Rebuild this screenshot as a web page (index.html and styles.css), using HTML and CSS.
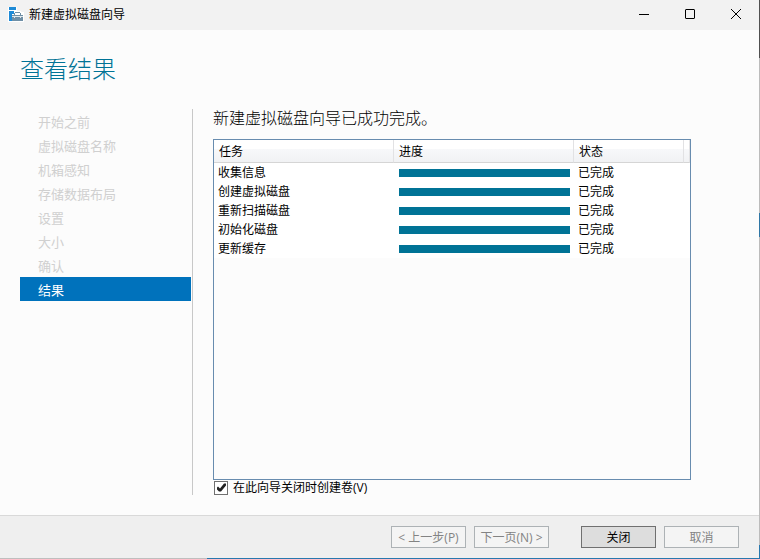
FILE: index.html
```html
<!DOCTYPE html>
<html lang="zh-CN">
<head>
<meta charset="utf-8">
<title>新建虚拟磁盘向导</title>
<link rel="stylesheet" href="styles.css">
</head>
<body>
<div class="window">
  <header class="titlebar">
    <svg class="app-icon" viewBox="0 0 16 16" shape-rendering="crispEdges" aria-hidden="true">
      <path fill="#fff" d="M0 0h9v4h4v1h3v10H0z"/>
      <path fill="#1e8ad6" d="M1 0h7v3H1zM1 4h5v3H4v7H1z"/>
      <path fill="#6f8fa6" d="M4 8h11v6H4zM6 6h1V5h5v1h1v2h-1V6H7v2H6z"/>
      <path fill="#dfe7ec" d="M4 9h11v1H4zM6 10h1v1H6zM12 10h1v1h-1z"/>
    </svg>
    <span class="window-title">新建虚拟磁盘向导</span>
    <div class="window-controls">
      <button type="button" aria-label="最小化"><svg viewBox="0 0 10 10"><path d="M0 5.500h10"/></svg></button>
      <button type="button" aria-label="最大化"><svg viewBox="0 0 10 10"><rect x=".5" y=".5" width="9" height="9" rx=".5"/></svg></button>
      <button type="button" aria-label="关闭窗口"><svg viewBox="0 0 10 10"><path d="M0 0l10 10M10 0L0 10"/></svg></button>
    </div>
  </header>
  <h1>查看结果</h1>
  <main class="content">
    <nav class="steps">
      <ol>
        <li>开始之前</li>
        <li>虚拟磁盘名称</li>
        <li>机箱感知</li>
        <li>存储数据布局</li>
        <li>设置</li>
        <li>大小</li>
        <li>确认</li>
        <li class="current" aria-current="step">结果</li>
      </ol>
    </nav>
    <section class="results">
      <h2>新建虚拟磁盘向导已成功完成。</h2>
      <div class="list">
        <table>
          <colgroup><col class="col-wide"><col class="col-wide"><col><col class="col-end"></colgroup>
          <thead><tr><th>任务</th><th>进度</th><th>状态</th><td></td></tr></thead>
          <tbody>
            <tr><td>收集信息</td><td><div class="bar"></div></td><td colspan="2">已完成</td></tr>
            <tr><td>创建虚拟磁盘</td><td><div class="bar"></div></td><td colspan="2">已完成</td></tr>
            <tr><td>重新扫描磁盘</td><td><div class="bar"></div></td><td colspan="2">已完成</td></tr>
            <tr><td>初始化磁盘</td><td><div class="bar"></div></td><td colspan="2">已完成</td></tr>
            <tr><td>更新缓存</td><td><div class="bar"></div></td><td colspan="2">已完成</td></tr>
          </tbody>
        </table>
      </div>
      <label class="option"><input type="checkbox" checked>在此向导关闭时创建卷(V)</label>
    </section>
  </main>
  <footer class="actions">
    <button type="button" disabled>&lt; 上一步(P)</button>
    <button type="button" disabled>下一页(N) &gt;</button>
    <button type="button" class="primary">关闭</button>
    <button type="button" disabled>取消</button>
  </footer>
</div>
</body>
</html>
```
FILE: styles.css
```css
* { box-sizing: border-box; }

body {
  margin: 0;
  font: 12px/16px "Open Sans", "Noto Sans CJK SC", sans-serif;
  color: #000;
  background: #fcfcfc;
}

/* The last pixel on the right and bottom shows the desktop behind the window. */
.window {
  display: flex;
  flex-direction: column;
  min-height: 100vh;
  padding: 0 1px 1px 0;
  background:
    linear-gradient(#505050 58px, #bcbcbc 58px 213px, #2f76a5 213px 237px, #bcbcbc 237px 545px, #2878ae 545px) right / 1px 100% no-repeat,
    linear-gradient(90deg, #bebebe 207px, #2878ae 207px) bottom / 100% 1px no-repeat;
}

.titlebar {
  display: flex;
  align-items: center;
  height: 30px;
  padding-left: 8px;
  background: #f2f2f2;
}

.app-icon { width: 16px; height: 16px; margin-right: 5px; }

.window-title { flex: 1; padding-bottom: 1px; }

.window-controls { display: flex; height: 100%; }

.window-controls button {
  display: flex;
  align-items: center;
  justify-content: center;
  width: 46px;
  padding: 0 0 2px;
  border: 0;
  background: none;
}

.window-controls svg {
  width: 10px;
  height: 10px;
  fill: none;
  stroke: #000;
}

h1 {
  margin: 22px 20px 24px;
  font-size: 24px;
  line-height: 33px;
  font-weight: 300;
  color: #007396;
}

.content {
  flex: 1;
  display: flex;
  padding: 0 68px 20px 20px;
}

.steps {
  width: 173px;
  padding-right: 1px;
  border-right: 1px solid #c8c8c8;
}

.steps ol {
  margin: 0;
  padding: 0;
  list-style: none;
}

.steps li {
  height: 24px;
  padding-left: 18px;
  font-size: 13px;
  line-height: 26px;
  color: #d0d0d0;
}

.steps .current {
  color: #fff;
  background: #0072bc;
}

.results {
  flex: 1;
  display: flex;
  flex-direction: column;
  margin-left: 20px;
}

h2 {
  margin: 0 0 11px;
  font-size: 16px;
  line-height: 19px;
  font-weight: 300;
}

.list {
  flex: 1;
  border: 1px solid #688caf;
}

table {
  width: 100%;
  border-spacing: 0;
  table-layout: fixed;
  background: #fff;
}

.col-wide { width: 180px; }
.col-end { width: 6px; }

td, th {
  height: 19px;
  padding: 0 4px;
  text-align: left;
  font-weight: 400;
}

thead th, thead td {
  height: 23px;
  padding: 1px 5px 0;
  border-right: 1px solid #e2e2e4;
  border-bottom: 1px solid #d5d5d5;
  background: linear-gradient(#fff 40%, #f7f8fa 40%, #f1f2f4);
}

thead td { padding: 0; }

.bar {
  height: 8px;
  margin-left: 1px;
  background: #007396;
}

.option {
  display: flex;
  align-items: center;
  gap: 5px;
  line-height: 15px;
}

.option input {
  appearance: none;
  width: 14px;
  height: 14px;
  margin: 0 0 0 1px;
  border: 1px solid #707070;
  background: #fff;
}

.option input:checked::before {
  content: "";
  display: block;
  height: 12px;
  background: #212121;
  clip-path: polygon(2px 6px, 3px 5px, 5px 7px, 9px 2px, 11px 2px, 11px 4px, 6px 10px, 4px 10px, 2px 8px);
}

.actions {
  display: flex;
  gap: 8px;
  justify-content: flex-end;
  padding: 10px 20px;
  border-top: 1px solid #d9d9d9;
  background: #efefef;
}

.actions button {
  width: 75px;
  height: 22px;
  padding: 1px 0 0;
  font: inherit;
  white-space: nowrap;
  border: 1px solid #adb2b5;
  color: #838383;
  background: #f4f4f4;
}

.actions .primary {
  margin-left: 24px;
  color: #000;
  border-color: #707070;
  background: #ddd;
}
```
